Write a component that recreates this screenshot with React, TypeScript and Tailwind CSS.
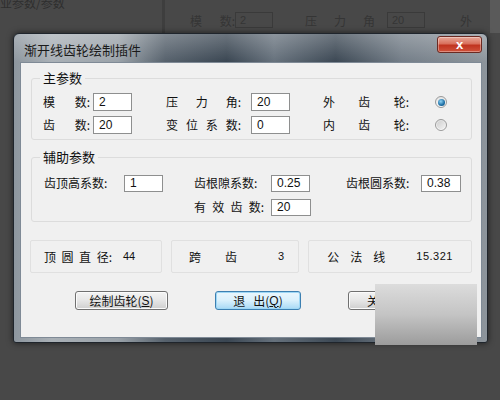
const cjk = { fontFamily: '"Noto Sans CJK SC", "Noto Sans", sans-serif' };
const latin = { fontFamily: '"Liberation Sans", "Noto Sans CJK SC", sans-serif' };

function Spread({ chars, w, className = "" }: { chars: string[]; w: number; className?: string }) {
  return (
    <div className={`flex justify-between items-center ${className}`} style={{ width: w }}>
      {chars.map((c, i) => (
        <span key={i}>{c}</span>
      ))}
    </div>
  );
}

function Field({ value, w = 39, h = 18 }: { value: string; w?: number; h?: number }) {
  return (
    <div
      className="flex items-center border border-[#8e8f8f] bg-white pl-[5px] text-[12px] leading-none text-[#111]"
      style={{ width: w, height: h, ...latin }}
    >
      {value}
    </div>
  );
}

function Radio({ checked }: { checked?: boolean }) {
  return (
    <div className="flex h-[12px] w-[12px] items-center justify-center rounded-full border border-[#9a9a9a] bg-gradient-to-b from-[#e4e4e4] to-[#fafafa]">
      {checked ? (
        <div className="h-[7px] w-[7px] rounded-full bg-[radial-gradient(circle_at_40%_35%,#8fd3f5,#1c6ea4_60%,#0d4a78)]" />
      ) : (
        <div className="h-[8px] w-[8px] rounded-full bg-gradient-to-br from-[#cfcfcf] to-[#f2f2f2]" />
      )}
    </div>
  );
}

function Group({ title, h, children }: { title: string; h: number; children: React.ReactNode }) {
  return (
    <div className="relative rounded-[3px] border border-[#dcdcdc]" style={{ height: h }}>
      <div className="absolute -top-[9px] left-[8px] bg-[#f0f0f0] px-[3px] text-[13px] leading-[16px] text-[#111]">
        {title}
      </div>
      {children}
    </div>
  );
}

function Btn({ children, w, focused }: { children: React.ReactNode; w: number; focused?: boolean }) {
  return (
    <div
      className={`flex h-[19px] items-center justify-center rounded-[3px] border text-[12px] leading-none text-[#111] ${
        focused
          ? "border-[#3c7fb1] bg-gradient-to-b from-[#eaf6fd] via-[#d9f0fc] to-[#a7d9f5] shadow-[inset_0_0_0_1px_#9ed7f5]"
          : "border-[#707070] bg-gradient-to-b from-[#f4f4f4] via-[#e6e6e6] to-[#cfcfcf] shadow-[inset_0_0_0_1px_#fbfbfb]"
      }`}
      style={{ width: w }}
    >
      {children}
    </div>
  );
}

export default function App() {
  return (
    <div className="relative h-[400px] w-[500px] overflow-hidden bg-[#484848] text-[12px]" style={cjk}>
      {/* dimmed window behind */}
      <div className="flex h-[33px] text-[#2e2e2e]">
        <div className="w-[165px] border-r-[3px] border-[#3e3e3e] pl-[0px] text-[12px] leading-[10px] -mt-[2px]">
          业参数/参数
        </div>
        <div className="flex flex-1 items-start pl-[25px] pt-[12px] text-[#353535]">
          <Spread chars={["模", "数:"]} w={45} />
          <div className="h-[16px] w-[38px] border border-[#3a3a3a] pl-[4px] text-[11px] leading-[14px]" style={latin}>2</div>
          <Spread chars={["压", "力", "角"]} w={70} className="ml-[32px]" />
          <div className="ml-[12px] h-[16px] w-[38px] border border-[#3a3a3a] pl-[4px] text-[11px] leading-[14px]" style={latin}>20</div>
          <span className="ml-[35px]">外</span>
          <div className="ml-auto h-[33px] w-[10px] -mt-[12px] bg-[#5a5a5a]" />
        </div>
      </div>

      {/* dialog window */}
      <div className="absolute left-[13px] top-[33px] flex h-[310px] w-[475px] flex-col rounded-t-[6px] rounded-b-[3px] border border-[#1f252c] bg-[linear-gradient(to_right,#8d969e_0%,#a9b0b6_8%,#9aa2a9_22%,#56616c_32%,#3a4652_45%,#66717c_55%,#3c4854_68%,#737d87_82%,#8d959c_100%)] shadow-[0_0_6px_rgba(0,0,0,0.6)]">
        {/* title bar */}
        <div className="relative h-[28px]">
          <div className="absolute inset-0 rounded-t-[6px] bg-gradient-to-b from-[rgba(255,255,255,0.25)] to-transparent" />
          <div className="relative pl-[10px] pt-[8px] text-[13px] leading-[16px] text-[#1a1a1a]">渐开线齿轮绘制插件</div>
          <div className="absolute right-[5px] top-[2px] flex h-[17px] w-[45px] items-center justify-center rounded-[3px] border border-[#6b2a22] bg-[linear-gradient(to_bottom,#e8a898_0%,#d9705c_45%,#c0341f_55%,#d0533c_100%)] shadow-[inset_0_0_0_1px_rgba(255,255,255,0.35)]">
            <span className="text-[13px] font-bold leading-none text-white" style={latin}>x</span>
          </div>
        </div>

        {/* client area */}
        <div className="ml-[6px] flex h-[276px] w-[462px] flex-col border border-[#7f8a96] bg-[#f0f0f0] px-[9px] pt-[15px] text-[#111]">
          <div className="pl-[1px]">
            <Group title="主参数" h={62}>
              <div className="grid grid-cols-[50px_39px_34px_85px_39px_33px_112px_12px] items-center gap-y-[5px] pl-[11px] pt-[14px]">
                <Spread chars={["模", "数:"]} w={47} />
                <Field value="2" />
                <div />
                <Spread chars={["压", "力", "角:"]} w={75} />
                <Field value="20" />
                <div />
                <Spread chars={["外", "齿", "轮:"]} w={86} />
                <Radio checked />

                <Spread chars={["齿", "数:"]} w={47} />
                <Field value="20" />
                <div />
                <Spread chars={["变", "位", "系", "数:"]} w={75} />
                <Field value="0" />
                <div />
                <Spread chars={["内", "齿", "轮:"]} w={86} />
                <Radio />
              </div>
            </Group>
          </div>

          <div className="mt-[17px] pl-[1px]">
            <Group title="辅助参数" h={65}>
              <div className="grid grid-cols-[80px_39px_31px_77px_39px_36px_75px_40px] items-center gap-y-[6px] pl-[12px] pt-[16px]">
                <span>齿顶高系数:</span>
                <Field value="1" h={17} />
                <div />
                <span>齿根隙系数:</span>
                <Field value="0.25" h={17} />
                <div />
                <span>齿根圆系数:</span>
                <Field value="0.38" w={40} h={17} />

                <div />
                <div />
                <div />
                <Spread chars={["有", "效", "齿", "数:"]} w={70} />
                <Field value="20" w={40} h={17} />
              </div>
            </Group>
          </div>

          <div className="mt-[18px] flex gap-[9px]">
            <div className="flex h-[33px] w-[134px] items-center rounded-[2px] border border-[#e0e0e0] pl-[13px]">
              <Spread chars={["顶", "圆", "直", "径:"]} w={68} />
              <span className="ml-[11px] text-[11px]" style={latin}>44</span>
            </div>
            <div className="flex h-[33px] w-[130px] items-center rounded-[2px] border border-[#e0e0e0] pl-[17px]">
              <Spread chars={["跨", "齿"]} w={48} />
              <span className="ml-[41px] text-[11px]" style={latin}>3</span>
            </div>
            <div className="flex h-[33px] w-[166px] items-center rounded-[2px] border border-[#e0e0e0] pl-[18px]">
              <Spread chars={["公", "法", "线"]} w={58} />
              <span className="ml-[31px] text-[11px] tracking-[0.5px]" style={latin}>15.321</span>
            </div>
          </div>

          <div className="mt-[18px] flex pl-[45px]">
            <Btn w={93}>
              绘制齿轮(<span className="underline" style={latin}>S</span>)
            </Btn>
            <div className="ml-[47px]">
              <Btn w={86} focused>
                退&nbsp;&nbsp;&nbsp;出(<span className="underline" style={latin}>Q</span>)
              </Btn>
            </div>
            <div className="ml-[47px]">
              <Btn w={92}>
                <span className="-ml-[42px]">关</span>
              </Btn>
            </div>
          </div>
        </div>
      </div>

      {/* gray rectangle over the dialog corner */}
      <div className="absolute left-[375px] top-[284px] h-[61px] w-[102px] bg-gradient-to-b from-[#dcdcdc] via-[#c4c4c4] to-[#9c9c9c]" />
    </div>
  );
}
